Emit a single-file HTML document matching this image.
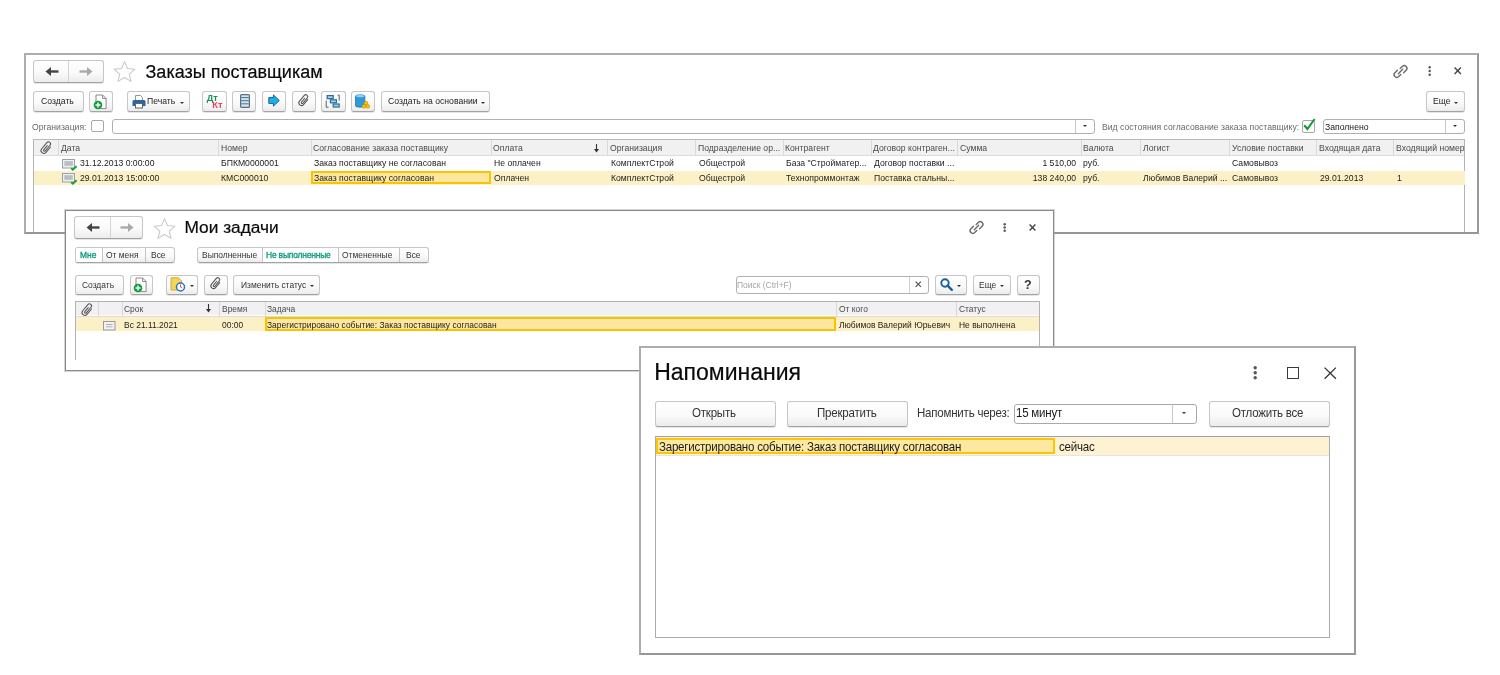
<!DOCTYPE html>
<html><head><meta charset="utf-8">
<style>
*{box-sizing:border-box}
html,body{margin:0;padding:0;background:#fff;width:1500px;height:675px;overflow:hidden;font-family:"Liberation Sans",sans-serif;color:#333}
.a{position:absolute}
svg.a{overflow:visible}
.win{position:absolute;background:#fff;border:2px solid #adadad;border-right-color:#999;border-bottom-color:#969696}
.btn{position:absolute;border:1px solid #c6c6c6;border-bottom:1.5px solid #a2a2a2;border-radius:3px;background:linear-gradient(#fff 0%,#fafafa 55%,#ececec 100%);box-shadow:0 1px 0 rgba(0,0,0,.10)}
.t{position:absolute;white-space:nowrap;line-height:1}
.title{position:absolute;white-space:nowrap;color:#0a0a0a;line-height:1;transform:translateZ(0);-webkit-text-stroke:0.2px #0a0a0a}
.inp{position:absolute;border:1px solid #b3b3b3;border-radius:3px;background:#fff}
</style></head><body>

<div class="win" style="left:24px;top:53px;width:1455px;height:181px;"></div>
<div class="btn" style="left:33px;top:60px;width:71px;height:23px;"></div>
<div class="a" style="left:68px;top:61px;width:1px;height:21px;background:#d4d4d4"></div>
<svg class="a" style="left:44.5px;top:66.0px" width="14" height="11" viewBox="0 0 14 11"><path d="M0.5 5.5L6 1v9z" fill="#444"/><path d="M5 5.5h8.5" stroke="#444" stroke-width="2.4"/></svg>
<svg class="a" style="left:78.5px;top:66.0px" width="14" height="11" viewBox="0 0 14 11"><path d="M13.5 5.5L8 1v9z" fill="#a9a9a9"/><path d="M0.5 5.5H9" stroke="#a9a9a9" stroke-width="2.4"/></svg>
<svg class="a" style="left:113px;top:60px" width="23" height="23" viewBox="0 0 24 23"><path d="M12 1.2l3.1 7.2 7.8.7-5.9 5.1 1.8 7.6L12 17.8l-6.8 4 1.8-7.6L1.1 9.1l7.8-.7z" fill="none" stroke="#c8c8c8" stroke-width="1.1" stroke-linejoin="round"/></svg>
<div class="title" style="left:145.5px;top:62.76px;font-size:18px">Заказы поставщикам</div>
<svg class="a" style="left:1393px;top:63.5px" width="15" height="15" viewBox="0 0 15 15"><g fill="none" stroke="#6a6a6a" stroke-width="1.4" stroke-linecap="round"><path d="M7.2 4.6l2.3-2.3a2.7 2.7 0 0 1 3.8 3.8L10.6 8.8"/><path d="M7.8 10.4l-2.3 2.3a2.7 2.7 0 0 1-3.8-3.8L4.4 6.2"/><path d="M5.3 9.7l4.4-4.4"/></g></svg>
<svg class="a" style="left:1427.8px;top:66px" width="3.4" height="10" viewBox="0 0 3.4 10"><circle cx="1.70" cy="1.20" r="1.2" fill="#555"/><circle cx="1.70" cy="5.00" r="1.2" fill="#555"/><circle cx="1.70" cy="8.80" r="1.2" fill="#555"/></svg>
<svg class="a" style="left:1454px;top:67px" width="7.5" height="7.5" viewBox="0 0 7.5 7.5"><path d="M0.6 0.6L6.9 6.9M6.9 0.6L0.6 6.9" stroke="#444" stroke-width="1.4"/></svg>
<div class="btn" style="left:33px;top:91px;width:51px;height:20.5px;"></div>
<div class="t" style="left:40.80px;top:97.28px;font-size:9.0px;color:#222;transform:scaleX(0.96) translateZ(0);transform-origin:0 0;">Создать</div>
<div class="btn" style="left:89px;top:91px;width:24px;height:20.5px;"></div>
<svg class="a" style="left:92.3px;top:93.5px" width="18" height="17" viewBox="0 0 18 17"><path d="M4 1h6.6l3.5 3.5V14.6H4z" fill="#fff" stroke="#8a8a8a" stroke-width="1"/><path d="M10.6 1v3.5h3.5" fill="none" stroke="#8a8a8a" stroke-width="1"/><circle cx="6" cy="11" r="4.3" fill="#0f9d3a"/><path d="M6 8.5v5M3.5 11h5" stroke="#fff" stroke-width="1.5"/></svg>
<div class="btn" style="left:126.5px;top:91px;width:63.0px;height:20.5px;"></div>
<svg class="a" style="left:132px;top:94.5px" width="14" height="13.5" viewBox="0 0 14 13.5"><path d="M3.5 .5h5l2 2v3h-7z" fill="#fff" stroke="#8a98a6" stroke-width="1"/><path d="M.5 6.5a1.5 1.5 0 0 1 1.5-1.5h10a1.5 1.5 0 0 1 1.5 1.5v4.5h-13z" fill="#2a6698"/><rect x="3.5" y="8.5" width="7" height="4.5" fill="#fff" stroke="#52687e" stroke-width="1"/></svg>
<div class="t" style="left:147.30px;top:97.28px;font-size:9.0px;color:#222;transform:scaleX(0.96) translateZ(0);transform-origin:0 0;">Печать</div>
<div class="a" style="left:180.45px;top:101.5px;width:0;height:0;border-left:2.25px solid transparent;border-right:2.25px solid transparent;border-top:2.6px solid #333"></div>
<div class="btn" style="left:202px;top:91px;width:25px;height:20.5px;"></div>
<div class="t" style="left:206.8px;top:94px;font-size:9.2px;font-weight:bold;color:#14965a;transform:translateZ(0)">Дт</div>
<div class="t" style="left:212.3px;top:101.4px;font-size:9.2px;font-weight:bold;color:#e5485c;transform:translateZ(0)">Кт</div>
<div class="btn" style="left:232px;top:91px;width:24px;height:20.5px;"></div>
<svg class="a" style="left:240px;top:94px" width="10" height="14" viewBox="0 0 10 14"><rect x=".6" y=".6" width="8.8" height="12.8" rx="1" fill="#c9e6f8" stroke="#5a6e7e" stroke-width="1.2"/><path d="M1.2 3.6h7.6M1.2 6.7h7.6M1.2 9.8h7.6" stroke="#5a6e7e" stroke-width="1"/></svg>
<div class="btn" style="left:262px;top:91px;width:24px;height:20.5px;"></div>
<svg class="a" style="left:268px;top:94px" width="12" height="13" viewBox="0 0 12 13"><path d="M.8 3.6h4.6V.9L11.3 6.5l-5.9 5.6V9.4H.8z" fill="#15b4ec" stroke="#1b5f9a" stroke-width="1" stroke-linejoin="round"/></svg>
<div class="btn" style="left:291.5px;top:91px;width:24.0px;height:20.5px;"></div>
<svg class="a" style="left:295.5px;top:92.5px" width="15" height="15" viewBox="0 0 24 24"><g transform="rotate(40 12 12)"><path d="M16.2 6.5V17a4.2 4.2 0 0 1-8.4 0V5a3.1 3.1 0 0 1 6.2 0V16a1.45 1.45 0 0 1-2.9 0V8" fill="none" stroke="#555" stroke-width="1.68" stroke-linecap="round"/></g></svg>
<div class="btn" style="left:321px;top:91px;width:24.5px;height:20.5px;"></div>
<svg class="a" style="left:325px;top:94px" width="17" height="15" viewBox="0 0 17 15"><g stroke="#2c6c94" fill="#9fd4f2" stroke-width="1.2"><rect x="2.2" y="1.6" width="6" height="3"/><rect x="5.4" y="5.8" width="6" height="3"/><rect x="8.2" y="10" width="6" height="3"/></g><path d="M1.2 6.5V13.2H3.5M12.6 1.2h1.6v5.5" fill="none" stroke="#55606a" stroke-width="1"/></svg>
<div class="btn" style="left:351px;top:91px;width:24px;height:20.5px;"></div>
<svg class="a" style="left:355px;top:93.8px" width="16" height="15" viewBox="0 0 16 15"><path d="M.6 2C.6.5 9.8.5 9.8 2v10c0 1.5-9.2 1.5-9.2 0z" fill="#2d9ad9" stroke="#1c6aa6" stroke-width=".8"/><ellipse cx="5.2" cy="2.1" rx="4.2" ry="1.2" fill="#8fd3f5"/><g fill="#f4c400" stroke="#c98a00" stroke-width=".6"><circle cx="9" cy="12.3" r="1.9"/><circle cx="12.8" cy="12.3" r="1.9"/><circle cx="10.9" cy="9.2" r="1.9"/></g></svg>
<div class="btn" style="left:380.5px;top:91px;width:109.5px;height:20.5px;"></div>
<div class="t" style="left:388.30px;top:97.28px;font-size:9.0px;color:#222;transform:scaleX(0.96) translateZ(0);transform-origin:0 0;">Создать на основании</div>
<div class="a" style="left:481.25px;top:101.5px;width:0;height:0;border-left:2.25px solid transparent;border-right:2.25px solid transparent;border-top:2.6px solid #333"></div>
<div class="btn" style="left:1426px;top:91px;width:38.5px;height:20.5px;"></div>
<div class="t" style="left:1433.30px;top:97.28px;font-size:9.0px;color:#222;transform:scaleX(0.96) translateZ(0);transform-origin:0 0;">Еще</div>
<div class="a" style="left:1453.75px;top:101.5px;width:0;height:0;border-left:2.25px solid transparent;border-right:2.25px solid transparent;border-top:2.6px solid #333"></div>
<div class="t" style="left:31.80px;top:122.88px;font-size:9.0px;color:#6a6a6a;transform:scaleX(0.96) translateZ(0);transform-origin:0 0;">Организация:</div>
<div class="a" style="left:91px;top:120px;width:13px;height:12px;border:1px solid #a8a8a8;border-radius:2px;background:#fff"></div>
<div class="a" style="left:112px;top:118.5px;width:983px;height:15.0px;border:1px solid #b0b0b0;border-radius:3px;background:#fff"></div>
<div class="a" style="left:1075px;top:119.5px;width:1px;height:13.0px;background:#c8c8c8"></div>
<div class="a" style="left:1082.50px;top:125px;width:0;height:0;border-left:2.0px solid transparent;border-right:2.0px solid transparent;border-top:2.3px solid #333"></div>
<div class="t" style="left:1101.80px;top:122.88px;font-size:9.0px;color:#6a6a6a;transform:scaleX(0.96) translateZ(0);transform-origin:0 0;">Вид состояния согласование заказа поставщику:</div>
<div class="a" style="left:1301.5px;top:119.5px;width:13.5px;height:13.0px;border:1px solid #a8a8a8;border-radius:2px;background:#fff"></div>
<svg class="a" style="left:1302px;top:116.5px" width="14" height="15" viewBox="0 0 14 15"><path d="M2.2 8.2l3.2 3.8L12.6 2" fill="none" stroke="#0f9d3a" stroke-width="2.1"/></svg>
<div class="a" style="left:1322.5px;top:118.5px;width:142.0px;height:15.0px;border:1px solid #b0b0b0;border-radius:3px;background:#fff"></div>
<div class="t" style="left:1324.80px;top:122.88px;font-size:9.0px;color:#222;transform:scaleX(0.96) translateZ(0);transform-origin:0 0;">Заполнено</div>
<div class="a" style="left:1444.5px;top:119.5px;width:1.0px;height:13.0px;background:#c8c8c8"></div>
<div class="a" style="left:1452.50px;top:125px;width:0;height:0;border-left:2.0px solid transparent;border-right:2.0px solid transparent;border-top:2.3px solid #333"></div>
<div class="a" style="left:33px;top:139px;width:1432px;height:93px;border:1px solid #b4b4b4;border-top-color:#bababa;border-bottom:none;background:#fff"></div>
<div class="a" style="left:34px;top:140px;width:1430px;height:14.5px;background:#f1f1f1"></div>
<div class="a" style="left:34px;top:155px;width:1430px;height:1px;background:#dcdcdc"></div>
<div class="a" style="left:57.5px;top:140px;width:1.0px;height:15.5px;background:#d9d9d9"></div>
<div class="a" style="left:218px;top:140px;width:1px;height:15.5px;background:#d9d9d9"></div>
<div class="a" style="left:310.5px;top:140px;width:1.0px;height:15.5px;background:#d9d9d9"></div>
<div class="a" style="left:490.5px;top:140px;width:1.0px;height:15.5px;background:#d9d9d9"></div>
<div class="a" style="left:606.5px;top:140px;width:1.0px;height:15.5px;background:#d9d9d9"></div>
<div class="a" style="left:695px;top:140px;width:1px;height:15.5px;background:#d9d9d9"></div>
<div class="a" style="left:782.5px;top:140px;width:1.0px;height:15.5px;background:#d9d9d9"></div>
<div class="a" style="left:870.5px;top:140px;width:1.0px;height:15.5px;background:#d9d9d9"></div>
<div class="a" style="left:957px;top:140px;width:1px;height:15.5px;background:#d9d9d9"></div>
<div class="a" style="left:1080.5px;top:140px;width:1.0px;height:15.5px;background:#d9d9d9"></div>
<div class="a" style="left:1140px;top:140px;width:1px;height:15.5px;background:#d9d9d9"></div>
<div class="a" style="left:1229px;top:140px;width:1px;height:15.5px;background:#d9d9d9"></div>
<div class="a" style="left:1316px;top:140px;width:1px;height:15.5px;background:#d9d9d9"></div>
<div class="a" style="left:1393px;top:140px;width:1px;height:15.5px;background:#d9d9d9"></div>
<svg class="a" style="left:37.5px;top:140px" width="16" height="16" viewBox="0 0 24 24"><g transform="rotate(40 12 12)"><path d="M16.2 6.5V17a4.2 4.2 0 0 1-8.4 0V5a3.1 3.1 0 0 1 6.2 0V16a1.45 1.45 0 0 1-2.9 0V8" fill="none" stroke="#555" stroke-width="1.58" stroke-linecap="round"/></g></svg>
<div class="t" style="left:61.30px;top:143.68px;font-size:9.0px;color:#4a4a4a;transform:scaleX(0.96) translateZ(0);transform-origin:0 0;">Дата</div>
<div class="t" style="left:220.80px;top:143.68px;font-size:9.0px;color:#4a4a4a;transform:scaleX(0.96) translateZ(0);transform-origin:0 0;">Номер</div>
<div class="t" style="left:313.30px;top:143.68px;font-size:9.0px;color:#4a4a4a;transform:scaleX(0.96) translateZ(0);transform-origin:0 0;">Согласование заказа поставщику</div>
<div class="t" style="left:493.30px;top:143.68px;font-size:9.0px;color:#4a4a4a;transform:scaleX(0.96) translateZ(0);transform-origin:0 0;">Оплата</div>
<div class="t" style="left:609.80px;top:143.68px;font-size:9.0px;color:#4a4a4a;transform:scaleX(0.96) translateZ(0);transform-origin:0 0;">Организация</div>
<div class="t" style="left:697.80px;top:143.68px;font-size:9.0px;color:#4a4a4a;transform:scaleX(0.96) translateZ(0);transform-origin:0 0;">Подразделение ор...</div>
<div class="t" style="left:785.30px;top:143.68px;font-size:9.0px;color:#4a4a4a;transform:scaleX(0.96) translateZ(0);transform-origin:0 0;">Контрагент</div>
<div class="t" style="left:873.30px;top:143.68px;font-size:9.0px;color:#4a4a4a;transform:scaleX(0.96) translateZ(0);transform-origin:0 0;">Договор контраген...</div>
<div class="t" style="left:959.80px;top:143.68px;font-size:9.0px;color:#4a4a4a;transform:scaleX(0.96) translateZ(0);transform-origin:0 0;">Сумма</div>
<div class="t" style="left:1083.30px;top:143.68px;font-size:9.0px;color:#4a4a4a;transform:scaleX(0.96) translateZ(0);transform-origin:0 0;">Валюта</div>
<div class="t" style="left:1142.80px;top:143.68px;font-size:9.0px;color:#4a4a4a;transform:scaleX(0.96) translateZ(0);transform-origin:0 0;">Логист</div>
<div class="t" style="left:1231.80px;top:143.68px;font-size:9.0px;color:#4a4a4a;transform:scaleX(0.96) translateZ(0);transform-origin:0 0;">Условие поставки</div>
<div class="t" style="left:1318.80px;top:143.68px;font-size:9.0px;color:#4a4a4a;transform:scaleX(0.96) translateZ(0);transform-origin:0 0;">Входящая дата</div>
<div class="t" style="left:1395.80px;top:143.68px;font-size:9.0px;color:#4a4a4a;transform:scaleX(0.96) translateZ(0);transform-origin:0 0;">Входящий номер</div>
<svg class="a" style="left:594px;top:143.5px" width="5" height="9" viewBox="0 0 5 9"><path d="M2.5 0v8" stroke="#333" stroke-width="1.1"/><path d="M0 5l2.5 3.6L5 5z" fill="#333"/></svg>
<svg class="a" style="left:62px;top:158.5px" width="16" height="12" viewBox="0 0 16 12"><rect x=".5" y=".5" width="12" height="8.5" fill="#eef0f2" stroke="#9aa0a6"/><rect x="2.3" y="2.2" width="8.5" height="4.6" fill="#b9bec4"/><path d="M9.2 9.3l1.6 1.4 3.8-3.4" fill="none" stroke="#14a03c" stroke-width="1.9"/></svg>
<div class="t" style="left:79.80px;top:159.38px;font-size:9.0px;color:#222;transform:scaleX(0.96) translateZ(0);transform-origin:0 0;">31.12.2013 0:00:00</div>
<div class="t" style="left:220.80px;top:159.38px;font-size:9.0px;color:#222;transform:scaleX(0.96) translateZ(0);transform-origin:0 0;">БПКМ0000001</div>
<div class="t" style="left:313.80px;top:159.38px;font-size:9.0px;color:#222;transform:scaleX(0.96) translateZ(0);transform-origin:0 0;">Заказ поставщику не согласован</div>
<div class="t" style="left:493.80px;top:159.38px;font-size:9.0px;color:#222;transform:scaleX(0.96) translateZ(0);transform-origin:0 0;">Не оплачен</div>
<div class="t" style="left:610.80px;top:159.38px;font-size:9.0px;color:#222;transform:scaleX(0.96) translateZ(0);transform-origin:0 0;">КомплектСтрой</div>
<div class="t" style="left:698.80px;top:159.38px;font-size:9.0px;color:#222;transform:scaleX(0.96) translateZ(0);transform-origin:0 0;">Общестрой</div>
<div class="t" style="left:786.30px;top:159.38px;font-size:9.0px;color:#222;transform:scaleX(0.96) translateZ(0);transform-origin:0 0;">База "Стройматер...</div>
<div class="t" style="left:873.80px;top:159.38px;font-size:9.0px;color:#222;transform:scaleX(0.96) translateZ(0);transform-origin:0 0;">Договор поставки ...</div>
<div class="t" style="left:1083.30px;top:159.38px;font-size:9.0px;color:#222;transform:scaleX(0.96) translateZ(0);transform-origin:0 0;">руб.</div>
<div class="t" style="left:1231.80px;top:159.38px;font-size:9.0px;color:#222;transform:scaleX(0.96) translateZ(0);transform-origin:0 0;">Самовывоз</div>
<div class="t" style="right:423.50px;top:159.38px;font-size:9.0px;color:#222;transform:scaleX(0.96) translateZ(0);transform-origin:100% 0;">1 510,00</div>
<div class="a" style="left:34px;top:171px;width:1430.5px;height:13.5px;background:#fcf0c6"></div>
<div class="a" style="left:310.5px;top:171px;width:180.0px;height:13px;background:#fde7a0;border:2px solid #f9c300"></div>
<svg class="a" style="left:62px;top:173px" width="16" height="12" viewBox="0 0 16 12"><rect x=".5" y=".5" width="12" height="8.5" fill="#eef0f2" stroke="#9aa0a6"/><rect x="2.3" y="2.2" width="8.5" height="4.6" fill="#b9bec4"/><path d="M9.2 9.3l1.6 1.4 3.8-3.4" fill="none" stroke="#14a03c" stroke-width="1.9"/></svg>
<div class="t" style="left:79.80px;top:173.78px;font-size:9.0px;color:#222;transform:scaleX(0.96) translateZ(0);transform-origin:0 0;">29.01.2013 15:00:00</div>
<div class="t" style="left:220.80px;top:173.78px;font-size:9.0px;color:#222;transform:scaleX(0.96) translateZ(0);transform-origin:0 0;">КМС000010</div>
<div class="t" style="left:313.80px;top:173.78px;font-size:9.0px;color:#222;transform:scaleX(0.96) translateZ(0);transform-origin:0 0;">Заказ поставщику согласован</div>
<div class="t" style="left:493.80px;top:173.78px;font-size:9.0px;color:#222;transform:scaleX(0.96) translateZ(0);transform-origin:0 0;">Оплачен</div>
<div class="t" style="left:610.80px;top:173.78px;font-size:9.0px;color:#222;transform:scaleX(0.96) translateZ(0);transform-origin:0 0;">КомплектСтрой</div>
<div class="t" style="left:698.80px;top:173.78px;font-size:9.0px;color:#222;transform:scaleX(0.96) translateZ(0);transform-origin:0 0;">Общестрой</div>
<div class="t" style="left:786.30px;top:173.78px;font-size:9.0px;color:#222;transform:scaleX(0.96) translateZ(0);transform-origin:0 0;">Технопроммонтаж</div>
<div class="t" style="left:873.80px;top:173.78px;font-size:9.0px;color:#222;transform:scaleX(0.96) translateZ(0);transform-origin:0 0;">Поставка стальны...</div>
<div class="t" style="left:1083.30px;top:173.78px;font-size:9.0px;color:#222;transform:scaleX(0.96) translateZ(0);transform-origin:0 0;">руб.</div>
<div class="t" style="left:1143.30px;top:173.78px;font-size:9.0px;color:#222;transform:scaleX(0.96) translateZ(0);transform-origin:0 0;">Любимов Валерий ...</div>
<div class="t" style="left:1231.80px;top:173.78px;font-size:9.0px;color:#222;transform:scaleX(0.96) translateZ(0);transform-origin:0 0;">Самовывоз</div>
<div class="t" style="left:1319.80px;top:173.78px;font-size:9.0px;color:#222;transform:scaleX(0.96) translateZ(0);transform-origin:0 0;">29.01.2013</div>
<div class="t" style="left:1396.80px;top:173.78px;font-size:9.0px;color:#222;transform:scaleX(0.96) translateZ(0);transform-origin:0 0;">1</div>
<div class="t" style="right:423.50px;top:173.78px;font-size:9.0px;color:#222;transform:scaleX(0.96) translateZ(0);transform-origin:100% 0;">138 240,00</div>
<div class="win" style="left:64.5px;top:210px;width:989.5px;height:161px;border-width:1px;border-color:#8a8a8a;box-shadow:0 0 0 1px rgba(150,150,150,.4)"></div>
<div class="btn" style="left:74px;top:216px;width:69px;height:22.5px;"></div>
<div class="a" style="left:109.5px;top:217px;width:1.0px;height:20.5px;background:#d4d4d4"></div>
<svg class="a" style="left:85.5px;top:221.75px" width="14" height="11" viewBox="0 0 14 11"><path d="M0.5 5.5L6 1v9z" fill="#444"/><path d="M5 5.5h8.5" stroke="#444" stroke-width="2.4"/></svg>
<svg class="a" style="left:120.0px;top:221.75px" width="14" height="11" viewBox="0 0 14 11"><path d="M13.5 5.5L8 1v9z" fill="#a9a9a9"/><path d="M0.5 5.5H9" stroke="#a9a9a9" stroke-width="2.4"/></svg>
<svg class="a" style="left:152.5px;top:217px" width="23" height="23" viewBox="0 0 24 23"><path d="M12 1.2l3.1 7.2 7.8.7-5.9 5.1 1.8 7.6L12 17.8l-6.8 4 1.8-7.6L1.1 9.1l7.8-.7z" fill="none" stroke="#c8c8c8" stroke-width="1.1" stroke-linejoin="round"/></svg>
<div class="title" style="left:184.5px;top:219.36px;font-size:17.3px">Мои задачи</div>
<svg class="a" style="left:969px;top:219.5px" width="15" height="15" viewBox="0 0 15 15"><g fill="none" stroke="#6a6a6a" stroke-width="1.4" stroke-linecap="round"><path d="M7.2 4.6l2.3-2.3a2.7 2.7 0 0 1 3.8 3.8L10.6 8.8"/><path d="M7.8 10.4l-2.3 2.3a2.7 2.7 0 0 1-3.8-3.8L4.4 6.2"/><path d="M5.3 9.7l4.4-4.4"/></g></svg>
<svg class="a" style="left:1002.8px;top:223px" width="3.4" height="9" viewBox="0 0 3.4 9"><circle cx="1.70" cy="1.20" r="1.2" fill="#555"/><circle cx="1.70" cy="4.50" r="1.2" fill="#555"/><circle cx="1.70" cy="7.80" r="1.2" fill="#555"/></svg>
<svg class="a" style="left:1028.8px;top:223.6px" width="7.0" height="7.0" viewBox="0 0 7.0 7.0"><path d="M0.6 0.6L6.4 6.4M6.4 0.6L0.6 6.4" stroke="#444" stroke-width="1.4"/></svg>
<div class="btn" style="left:74.5px;top:247px;width:100.5px;height:16px;"></div>
<div class="a" style="left:75.5px;top:248px;width:26.0px;height:13.5px;background:#fff;border-radius:2px 0 0 2px"></div>
<div class="a" style="left:101.5px;top:248px;width:1.0px;height:14px;background:#c4c4c4"></div>
<div class="a" style="left:145px;top:248px;width:1px;height:14px;background:#c4c4c4"></div>
<div class="t" style="left:79.80px;top:250.24px;font-size:9.4px;color:#0e9a7c;transform:scaleX(0.9) translateZ(0);transform-origin:0 0;-webkit-text-stroke:0.35px #0e9a7c">Мне</div>
<div class="t" style="left:105.60px;top:250.24px;font-size:9.4px;color:#333;transform:scaleX(0.9) translateZ(0);transform-origin:0 0;">От меня</div>
<div class="t" style="left:151.20px;top:250.24px;font-size:9.4px;color:#333;transform:scaleX(0.9) translateZ(0);transform-origin:0 0;">Все</div>
<div class="btn" style="left:197px;top:247px;width:232px;height:16px;"></div>
<div class="a" style="left:262px;top:248px;width:76px;height:13.5px;background:#fff"></div>
<div class="a" style="left:261.5px;top:248px;width:1.0px;height:14px;background:#c4c4c4"></div>
<div class="a" style="left:338px;top:248px;width:1px;height:14px;background:#c4c4c4"></div>
<div class="a" style="left:398.5px;top:248px;width:1.0px;height:14px;background:#c4c4c4"></div>
<div class="t" style="left:201.80px;top:250.24px;font-size:9.4px;color:#333;transform:scaleX(0.9) translateZ(0);transform-origin:0 0;">Выполненные</div>
<div class="t" style="left:265.80px;top:250.24px;font-size:9.4px;color:#0e9a7c;transform:scaleX(0.9) translateZ(0);transform-origin:0 0;-webkit-text-stroke:0.35px #0e9a7c;letter-spacing:-0.2px">Не выполненные</div>
<div class="t" style="left:341.80px;top:250.24px;font-size:9.4px;color:#333;transform:scaleX(0.9) translateZ(0);transform-origin:0 0;">Отмененные</div>
<div class="t" style="left:406.30px;top:250.24px;font-size:9.4px;color:#333;transform:scaleX(0.9) translateZ(0);transform-origin:0 0;">Все</div>
<div class="btn" style="left:74.5px;top:274.5px;width:49.0px;height:20.0px;"></div>
<div class="t" style="left:82.00px;top:279.54px;font-size:9.4px;color:#333;transform:scaleX(0.9) translateZ(0);transform-origin:0 0;">Создать</div>
<div class="btn" style="left:129.5px;top:274.5px;width:23.0px;height:20.0px;"></div>
<svg class="a" style="left:132.3px;top:276.6px" width="18" height="17" viewBox="0 0 18 17"><path d="M4 1h6.6l3.5 3.5V14.6H4z" fill="#fff" stroke="#8a8a8a" stroke-width="1"/><path d="M10.6 1v3.5h3.5" fill="none" stroke="#8a8a8a" stroke-width="1"/><circle cx="6" cy="11" r="4.3" fill="#0f9d3a"/><path d="M6 8.5v5M3.5 11h5" stroke="#fff" stroke-width="1.5"/></svg>
<div class="btn" style="left:165.5px;top:274.5px;width:32.5px;height:20.0px;"></div>
<svg class="a" style="left:170px;top:276.5px" width="16" height="16" viewBox="0 0 16 16"><path d="M1 .8h7.5l3 3V13H1z" fill="#f4d35e" stroke="#d6aa2c" stroke-width="1"/><circle cx="10.5" cy="10" r="4" fill="#fff" stroke="#2a74b8" stroke-width="1.5"/><path d="M10.5 7.6V10l1.6 1" fill="none" stroke="#d8404a" stroke-width="1"/></svg>
<div class="a" style="left:189.80px;top:284.8px;width:0;height:0;border-left:2.0px solid transparent;border-right:2.0px solid transparent;border-top:2.3px solid #333"></div>
<div class="btn" style="left:204px;top:274.5px;width:23.5px;height:20.0px;"></div>
<svg class="a" style="left:208px;top:276px" width="15" height="15" viewBox="0 0 24 24"><g transform="rotate(40 12 12)"><path d="M16.2 6.5V17a4.2 4.2 0 0 1-8.4 0V5a3.1 3.1 0 0 1 6.2 0V16a1.45 1.45 0 0 1-2.9 0V8" fill="none" stroke="#555" stroke-width="1.68" stroke-linecap="round"/></g></svg>
<div class="btn" style="left:233px;top:274.5px;width:87px;height:20.0px;"></div>
<div class="t" style="left:240.50px;top:279.54px;font-size:9.4px;color:#333;transform:scaleX(0.9) translateZ(0);transform-origin:0 0;">Изменить статус</div>
<div class="a" style="left:309.50px;top:284.8px;width:0;height:0;border-left:2.0px solid transparent;border-right:2.0px solid transparent;border-top:2.3px solid #333"></div>
<div class="a" style="left:735.5px;top:275.5px;width:193.0px;height:18.0px;border:1px solid #b0b0b0;border-radius:3px;background:#fff"></div>
<div class="t" style="left:736.80px;top:279.54px;font-size:9.4px;color:#a5a5a5;transform:scaleX(0.9) translateZ(0);transform-origin:0 0;">Поиск (Ctrl+F)</div>
<div class="a" style="left:908.5px;top:276.5px;width:1.0px;height:16.0px;background:#d2d2d2"></div>
<svg class="a" style="left:915px;top:281px" width="6.5" height="6.5" viewBox="0 0 6.5 6.5"><path d="M0.6 0.6L5.9 5.9M5.9 0.6L0.6 5.9" stroke="#555" stroke-width="1.2"/></svg>
<div class="btn" style="left:934.5px;top:274.5px;width:32.0px;height:20.0px;"></div>
<svg class="a" style="left:940px;top:277.5px" width="13" height="13" viewBox="0 0 13 13"><circle cx="5" cy="5" r="3.7" fill="none" stroke="#1c5fa0" stroke-width="1.9"/><path d="M7.6 7.6l4.2 4.2" stroke="#1c5fa0" stroke-width="2.4" stroke-linecap="round"/></svg>
<div class="a" style="left:956.50px;top:284.8px;width:0;height:0;border-left:2.0px solid transparent;border-right:2.0px solid transparent;border-top:2.3px solid #333"></div>
<div class="btn" style="left:972.5px;top:274.5px;width:38.5px;height:20.0px;"></div>
<div class="t" style="left:979.30px;top:279.54px;font-size:9.4px;color:#333;transform:scaleX(0.9) translateZ(0);transform-origin:0 0;">Еще</div>
<div class="a" style="left:1000.30px;top:284.8px;width:0;height:0;border-left:2.0px solid transparent;border-right:2.0px solid transparent;border-top:2.3px solid #333"></div>
<div class="btn" style="left:1016.5px;top:274.5px;width:23.5px;height:20.0px;"></div>
<div class="t" style="left:1024px;top:278.5px;font-size:12.5px;font-weight:bold;color:#333;transform:translateZ(0)">?</div>
<div class="a" style="left:75px;top:301px;width:965px;height:59px;border:1px solid #b2b2b2;border-bottom:none;background:#fff"></div>
<div class="a" style="left:76px;top:302px;width:963px;height:13px;background:#f1f1f1"></div>
<div class="a" style="left:76px;top:316px;width:963px;height:1px;background:#dcdcdc"></div>
<div class="a" style="left:98px;top:302px;width:1px;height:14.5px;background:#d9d9d9"></div>
<div class="a" style="left:121.5px;top:302px;width:1.0px;height:14.5px;background:#d9d9d9"></div>
<div class="a" style="left:219px;top:302px;width:1px;height:14.5px;background:#d9d9d9"></div>
<div class="a" style="left:264.5px;top:302px;width:1.0px;height:14.5px;background:#d9d9d9"></div>
<div class="a" style="left:836px;top:302px;width:1px;height:14.5px;background:#d9d9d9"></div>
<div class="a" style="left:955.8px;top:302px;width:1.0px;height:14.5px;background:#d9d9d9"></div>
<svg class="a" style="left:79px;top:301.5px" width="16" height="16" viewBox="0 0 24 24"><g transform="rotate(40 12 12)"><path d="M16.2 6.5V17a4.2 4.2 0 0 1-8.4 0V5a3.1 3.1 0 0 1 6.2 0V16a1.45 1.45 0 0 1-2.9 0V8" fill="none" stroke="#555" stroke-width="1.58" stroke-linecap="round"/></g></svg>
<div class="t" style="left:123.80px;top:304.24px;font-size:9.4px;color:#4a4a4a;transform:scaleX(0.9) translateZ(0);transform-origin:0 0;">Срок</div>
<div class="t" style="left:221.80px;top:304.24px;font-size:9.4px;color:#4a4a4a;transform:scaleX(0.9) translateZ(0);transform-origin:0 0;">Время</div>
<div class="t" style="left:267.30px;top:304.24px;font-size:9.4px;color:#4a4a4a;transform:scaleX(0.9) translateZ(0);transform-origin:0 0;">Задача</div>
<div class="t" style="left:838.60px;top:304.24px;font-size:9.4px;color:#4a4a4a;transform:scaleX(0.9) translateZ(0);transform-origin:0 0;">От кого</div>
<div class="t" style="left:958.80px;top:304.24px;font-size:9.4px;color:#4a4a4a;transform:scaleX(0.9) translateZ(0);transform-origin:0 0;">Статус</div>
<svg class="a" style="left:206px;top:304px" width="5" height="9" viewBox="0 0 5 9"><path d="M2.5 0v8" stroke="#333" stroke-width="1.1"/><path d="M0 5l2.5 3.6L5 5z" fill="#333"/></svg>
<div class="a" style="left:76px;top:316.5px;width:963px;height:14.0px;background:#fcf0c6"></div>
<div class="a" style="left:264.5px;top:317px;width:571.5px;height:13.5px;background:#fde7a0;border:2px solid #f9c300"></div>
<svg class="a" style="left:103px;top:320.5px" width="13" height="10" viewBox="0 0 13 10"><rect x=".5" y=".5" width="11.5" height="8.5" fill="#f2f2f2" stroke="#9a9a9a"/><path d="M3 3.5h6.5M3 5.8h6.5" stroke="#b0b0b0"/></svg>
<div class="t" style="left:123.80px;top:320.04px;font-size:9.4px;color:#222;transform:scaleX(0.9) translateZ(0);transform-origin:0 0;">Вс 21.11.2021</div>
<div class="t" style="left:221.80px;top:320.04px;font-size:9.4px;color:#222;transform:scaleX(0.9) translateZ(0);transform-origin:0 0;">00:00</div>
<div class="t" style="left:267.30px;top:320.04px;font-size:9.4px;color:#222;transform:scaleX(0.9) translateZ(0);transform-origin:0 0;">Зарегистрировано событие: Заказ поставщику согласован</div>
<div class="t" style="left:838.90px;top:320.04px;font-size:9.4px;color:#222;transform:scaleX(0.9) translateZ(0);transform-origin:0 0;">Любимов Валерий Юрьевич</div>
<div class="t" style="left:958.80px;top:320.04px;font-size:9.4px;color:#222;transform:scaleX(0.9) translateZ(0);transform-origin:0 0;">Не выполнена</div>
<div class="win" style="left:639px;top:346px;width:717px;height:309px;"></div>
<div class="title" style="left:654.2px;top:360.93px;font-size:23px">Напоминания</div>
<svg class="a" style="left:1252.8px;top:365.5px" width="4.4" height="13.5" viewBox="0 0 4.4 13.5"><circle cx="2.20" cy="1.70" r="1.7" fill="#555"/><circle cx="2.20" cy="6.75" r="1.7" fill="#555"/><circle cx="2.20" cy="11.80" r="1.7" fill="#555"/></svg>
<div class="a" style="left:1287px;top:367px;width:12px;height:11.5px;border:1.5px solid #3a3a3a"></div>
<svg class="a" style="left:1324px;top:366.5px" width="12.5" height="12.300000000000011" viewBox="0 0 12.5 12.300000000000011"><path d="M0.6 0.6L11.9 11.700000000000012M11.9 0.6L0.6 11.700000000000012" stroke="#333" stroke-width="1.3"/></svg>
<div class="btn" style="left:654.5px;top:400.5px;width:121.5px;height:26.0px;"></div>
<div class="t" style="left:692.00px;top:406.46px;font-size:13.4px;color:#333;transform:scaleX(0.86) translateZ(0);transform-origin:0 0;letter-spacing:-0.25px;">Открыть</div>
<div class="btn" style="left:786.5px;top:400.5px;width:121.5px;height:26.0px;"></div>
<div class="t" style="left:816.60px;top:406.46px;font-size:13.4px;color:#333;transform:scaleX(0.86) translateZ(0);transform-origin:0 0;letter-spacing:-0.25px;">Прекратить</div>
<div class="t" style="left:917.00px;top:406.46px;font-size:13.4px;color:#333;transform:scaleX(0.86) translateZ(0);transform-origin:0 0;letter-spacing:-0.25px;">Напомнить через:</div>
<div class="a" style="left:1013.5px;top:403.5px;width:183.5px;height:20.0px;border:1px solid #a9a9a9;border-radius:3px;background:#fff"></div>
<div class="t" style="left:1016.00px;top:406.46px;font-size:13.4px;color:#1a1a1a;transform:scaleX(0.86) translateZ(0);transform-origin:0 0;letter-spacing:-0.25px;">15 минут</div>
<div class="a" style="left:1171.5px;top:404.5px;width:1.0px;height:18.0px;background:#c8c8c8"></div>
<div class="a" style="left:1182.25px;top:412.3px;width:0;height:0;border-left:2.25px solid transparent;border-right:2.25px solid transparent;border-top:2.6px solid #333"></div>
<div class="btn" style="left:1208.5px;top:400.5px;width:121.0px;height:26.0px;"></div>
<div class="t" style="left:1231.60px;top:406.46px;font-size:13.4px;color:#333;transform:scaleX(0.86) translateZ(0);transform-origin:0 0;letter-spacing:-0.25px;">Отложить все</div>
<div class="a" style="left:654.5px;top:436px;width:675.5px;height:202px;border:1px solid #ababab;border-top-color:#a49cb8;background:#fff"></div>
<div class="a" style="left:655.5px;top:437px;width:673.5px;height:17.5px;background:#fdf3d3"></div>
<div class="a" style="left:655.5px;top:454.5px;width:673.5px;height:1.0px;background:#e8e2f0"></div>
<div class="a" style="left:655.5px;top:437.5px;width:399.0px;height:16.5px;background:#fde8a2;border:2.5px solid #fbc500;border-left-width:2px"></div>
<div class="t" style="left:659.00px;top:439.66px;font-size:13.4px;color:#1a1a1a;transform:scaleX(0.86) translateZ(0);transform-origin:0 0;letter-spacing:-0.25px;">Зарегистрировано событие: Заказ поставщику согласован</div>
<div class="t" style="left:1059.20px;top:439.66px;font-size:13.4px;color:#1a1a1a;transform:scaleX(0.86) translateZ(0);transform-origin:0 0;letter-spacing:-0.25px;">сейчас</div>
</body></html>
